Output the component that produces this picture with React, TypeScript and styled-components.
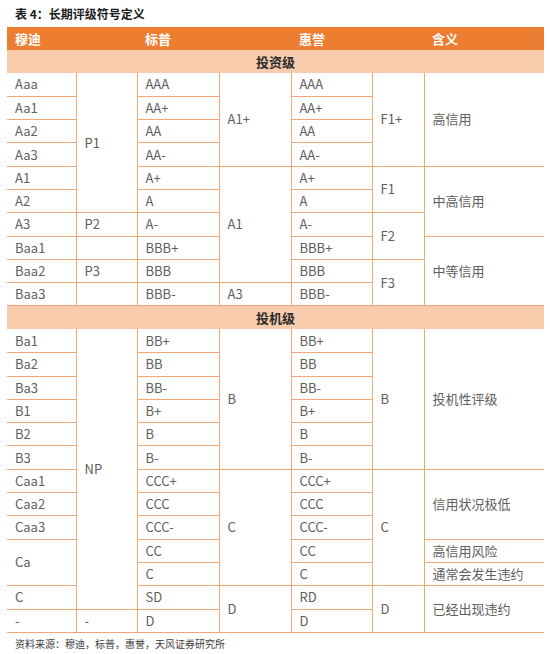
import React from "react";
import styled, { createGlobalStyle } from "styled-components";

const Global = createGlobalStyle`
  html, body { margin: 0; padding: 0; background: #ffffff; }
  body { font-family: "Noto Sans CJK SC", "Noto Sans", sans-serif; }
`;

const Page = styled.div`
  width: 550px;
  padding: 0 6px 0 7px;
  box-sizing: border-box;
`;

const Title = styled.div`
  padding: 4px 0 3px 8px;
  line-height: 20px;
  font-size: 12px;
  font-weight: 700;
  color: #1a1a1a;
`;

const Table = styled.table`
  width: 537px;
  border-collapse: collapse;
  table-layout: fixed;
  font-size: 13px;
  color: #606060;
`;

const HeadCell = styled.th`
  background: #ed7d31;
  color: #ffffff;
  font-weight: 700;
  font-size: 13px;
  text-align: left;
  padding: 0 0 0 8px;
  height: 23px;
  border: none;
`;

const SectionCell = styled.td`
  background: #f8cbad;
  color: #2b2b2b;
  font-weight: 700;
  text-align: center;
  height: 23px;
  padding: 0;
  border: none;
`;

const Row = styled.tr`
  height: 23.3px;
`;

const Cell = styled.td<{ $last?: boolean }>`
  padding: 0 0 0 8px;
  white-space: nowrap;
  vertical-align: middle;
  border-bottom: 1px solid #f1a877;
  border-right: ${(p) => (p.$last ? "none" : "1px solid #f1a877")};
  border-left: none;
  line-height: 16px;
`;

const Footer = styled.div`
  margin-top: 3px;
  padding-left: 8px;
  line-height: 15px;
  font-size: 10px;
  color: #3c3c3c;
`;

type C = { t: string; rs?: number; col: number };
const c = (col: number, t: string, rs?: number): C => ({ t, rs, col });

const sec1: C[][] = [
  [c(0, "Aaa"), c(1, "P1", 6), c(2, "AAA"), c(3, "A1+", 4), c(4, "AAA"), c(5, "F1+", 4), c(6, "高信用", 4)],
  [c(0, "Aa1"), c(2, "AA+"), c(4, "AA+")],
  [c(0, "Aa2"), c(2, "AA"), c(4, "AA")],
  [c(0, "Aa3"), c(2, "AA-"), c(4, "AA-")],
  [c(0, "A1"), c(2, "A+"), c(3, "A1", 5), c(4, "A+"), c(5, "F1", 2), c(6, "中高信用", 3)],
  [c(0, "A2"), c(2, "A"), c(4, "A")],
  [c(0, "A3"), c(1, "P2"), c(2, "A-"), c(4, "A-"), c(5, "F2", 2)],
  [c(0, "Baa1"), c(1, ""), c(2, "BBB+"), c(4, "BBB+"), c(6, "中等信用", 3)],
  [c(0, "Baa2"), c(1, "P3"), c(2, "BBB"), c(4, "BBB"), c(5, "F3", 2)],
  [c(0, "Baa3"), c(1, ""), c(2, "BBB-"), c(3, "A3"), c(4, "BBB-")],
];

const sec2: C[][] = [
  [c(0, "Ba1"), c(1, "NP", 12), c(2, "BB+"), c(3, "B", 6), c(4, "BB+"), c(5, "B", 6), c(6, "投机性评级", 6)],
  [c(0, "Ba2"), c(2, "BB"), c(4, "BB")],
  [c(0, "Ba3"), c(2, "BB-"), c(4, "BB-")],
  [c(0, "B1"), c(2, "B+"), c(4, "B+")],
  [c(0, "B2"), c(2, "B"), c(4, "B")],
  [c(0, "B3"), c(2, "B-"), c(4, "B-")],
  [c(0, "Caa1"), c(2, "CCC+"), c(3, "C", 5), c(4, "CCC+"), c(5, "C", 5), c(6, "信用状况极低", 3)],
  [c(0, "Caa2"), c(2, "CCC"), c(4, "CCC")],
  [c(0, "Caa3"), c(2, "CCC-"), c(4, "CCC-")],
  [c(0, "Ca", 2), c(2, "CC"), c(4, "CC"), c(6, "高信用风险")],
  [c(2, "C"), c(4, "C"), c(6, "通常会发生违约")],
  [c(0, "C"), c(2, "SD"), c(3, "D", 2), c(4, "RD"), c(5, "D", 2), c(6, "已经出现违约", 2)],
  [c(0, "-"), c(1, "-"), c(2, "D"), c(4, "D")],
];

const widths = [69, 61, 82, 72, 81, 52, 120];

const renderRows = (rows: C[][], key: string) =>
  rows.map((r, i) => (
    <Row key={`${key}-${i}`}>
      {r.map((cell) => (
        <Cell key={cell.col} rowSpan={cell.rs} $last={cell.col === 6}>
          {cell.t}
        </Cell>
      ))}
    </Row>
  ));

export default function App() {
  return (
    <Page>
      <Global />
      <Title>表 4：长期评级符号定义</Title>
      <Table>
        <colgroup>
          {widths.map((w, i) => (
            <col key={i} style={{ width: w }} />
          ))}
        </colgroup>
        <tbody>
          <tr>
            <HeadCell colSpan={2}>穆迪</HeadCell>
            <HeadCell colSpan={2}>标普</HeadCell>
            <HeadCell colSpan={2}>惠誉</HeadCell>
            <HeadCell>含义</HeadCell>
          </tr>
          <tr>
            <SectionCell colSpan={7}>投资级</SectionCell>
          </tr>
          {renderRows(sec1, "a")}
          <tr>
            <SectionCell colSpan={7}>投机级</SectionCell>
          </tr>
          {renderRows(sec2, "b")}
        </tbody>
      </Table>
      <Footer>资料来源：穆迪，标普，惠誉，天风证券研究所</Footer>
    </Page>
  );
}
